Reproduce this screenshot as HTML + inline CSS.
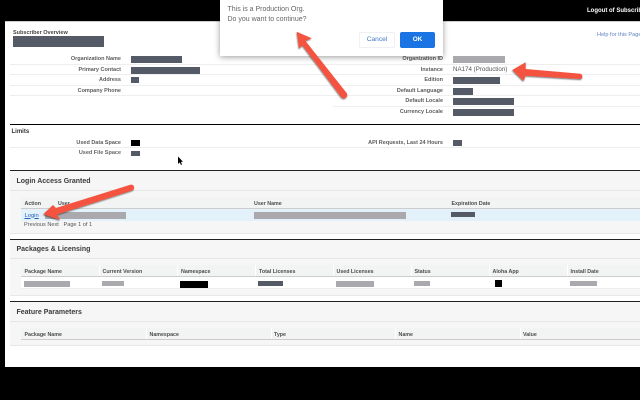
<!DOCTYPE html>
<html><head><meta charset="utf-8"><style>
html,body{margin:0;padding:0;background:#000}
body{width:640px;height:400px;position:relative;overflow:hidden;font-family:"Liberation Sans",sans-serif}
#p{position:absolute;left:0;top:0;width:640px;height:400px;overflow:hidden;filter:blur(.3px)}
#p div{position:absolute}
.t,.l,.h,.s{white-space:nowrap;line-height:8px;height:8px;margin-top:1px}
.l{font-size:5.5px;font-weight:bold;color:#5c5c5c;text-align:right;width:120px}
.h{font-size:5.3px;font-weight:bold;color:#4c4c4c}
.s{font-size:7px;font-weight:bold;color:#3a3a3a;margin-top:1.5px}
.d{background:#555b66}.g{background:#aaaaae}.k{background:#000}
.r{height:1px;background:#eeeeee}
.v{width:1px;background:#fff}
</style></head><body><div id="p">
<div style="left:5px;top:21px;width:635px;height:346px;background:#fff;border-top:1px solid #ccc;box-sizing:border-box"></div>

<div class="t" style="left:587px;top:6px;font-size:6px;font-weight:bold;color:#fff">Logout of Subscriber</div>
<div class="t" style="left:13px;top:27.5px;font-size:5.5px;font-weight:bold;color:#444">Subscriber Overview</div>
<div class="t" style="left:597px;top:29.5px;font-size:5.6px;color:#5f83c4">Help for this Page</div>
<div class="d" style="left:13px;top:36px;width:91px;height:11px"></div>

<div class="r" style="left:10px;top:64px;width:630px"></div>
<div class="r" style="left:10px;top:74px;width:630px"></div>
<div class="r" style="left:10px;top:85px;width:630px"></div>
<div class="r" style="left:10px;top:95px;width:630px"></div>
<div class="r" style="left:333px;top:106px;width:307px"></div>

<div class="l" style="left:1px;top:54px">Organization Name</div>
<div class="l" style="left:1px;top:64.5px">Primary Contact</div>
<div class="l" style="left:1px;top:75px">Address</div>
<div class="l" style="left:1px;top:85.5px">Company Phone</div>
<div class="d" style="left:131px;top:56px;width:51px;height:7px"></div>
<div class="d" style="left:131px;top:67px;width:69px;height:6.5px"></div>
<div class="d" style="left:131px;top:77px;width:8px;height:5.5px"></div>

<div class="l" style="left:323px;top:54px">Organization ID</div>
<div class="l" style="left:323px;top:64.5px">Instance</div>
<div class="l" style="left:323px;top:75px">Edition</div>
<div class="l" style="left:323px;top:85.5px">Default Language</div>
<div class="l" style="left:323px;top:96px">Default Locale</div>
<div class="l" style="left:323px;top:106.5px">Currency Locale</div>
<div class="g" style="left:452.7px;top:56px;width:52.5px;height:7px"></div>
<div class="t" style="left:453px;top:64.5px;font-size:6.2px;color:#555">NA174 (Production)</div>
<div class="d" style="left:453px;top:77px;width:47px;height:7px"></div>
<div class="d" style="left:453px;top:88px;width:20px;height:6.5px"></div>
<div class="d" style="left:453px;top:98px;width:61px;height:7px"></div>
<div class="d" style="left:453px;top:109px;width:61px;height:6.5px"></div>

<div class="k" style="left:10px;top:124px;width:630px;height:1px"></div>
<div class="t" style="left:11.5px;top:127px;font-size:6px;font-weight:bold;color:#333">Limits</div>
<div class="r" style="left:10px;top:147px;width:630px"></div>
<div class="l" style="left:1px;top:137.5px">Used Data Space</div>
<div class="l" style="left:1px;top:148px;color:#666">Used File Space</div>
<div class="l" style="left:323px;top:137.5px">API Requests, Last 24 Hours</div>
<div class="k" style="left:131px;top:140px;width:9px;height:5.5px"></div>
<div class="d" style="left:131px;top:150.5px;width:9px;height:5.5px"></div>
<div class="d" style="left:452.7px;top:140px;width:9.5px;height:5.5px"></div>

<!-- Login section -->
<div style="left:10px;top:171px;width:630px;height:63px;background:#f6f6f6;border-bottom:1px solid #e8e8e8;box-sizing:border-box"></div>
<div style="left:10px;top:170px;width:630px;height:1.3px;background:#222"></div>
<div class="r" style="left:10px;top:190px;width:630px;background:#e6e6e6"></div>
<div class="s" style="left:16.5px;top:176.5px">Login Access Granted</div>
<div style="left:21px;top:197px;width:619px;height:11.5px;background:#f2f3f3;border-bottom:1px solid #ccc;box-sizing:border-box"></div>
<div class="h" style="left:24.5px;top:198.5px">Action</div>
<div class="h" style="left:58px;top:198.5px">User</div>
<div class="h" style="left:254px;top:198.5px">User Name</div>
<div class="h" style="left:451.5px;top:198.5px">Expiration Date</div>
<div style="left:21px;top:208.5px;width:619px;height:12px;background:#e3f1fb"></div>
<div class="t" style="left:24.5px;top:210.5px;font-size:5.8px;color:#1f5fbf;text-decoration:underline">Login</div>
<div class="g" style="left:45px;top:212px;width:81px;height:7px"></div>
<div class="g" style="left:254px;top:212px;width:152px;height:7px"></div>
<div class="d" style="left:450.5px;top:212px;width:24px;height:5px"></div>
<div class="t" style="left:24px;top:219.5px;font-size:5.6px;color:#555;white-space:pre">Previous Next   Page 1 of 1</div>

<!-- Packages -->
<div style="left:10px;top:240px;width:630px;height:56px;background:#f6f6f6;border-bottom:1px solid #e8e8e8;box-sizing:border-box"></div>
<div style="left:10px;top:239px;width:630px;height:1.3px;background:#222"></div>
<div class="r" style="left:10px;top:258px;width:630px;background:#e6e6e6"></div>
<div class="s" style="left:16.5px;top:244.5px">Packages &amp; Licensing</div>
<div style="left:21px;top:265px;width:619px;height:12px;background:#f2f3f3;border-bottom:1px solid #ccc;box-sizing:border-box"></div>
<div class="v" style="left:99px;top:265px;height:11px"></div>
<div class="v" style="left:177px;top:265px;height:11px"></div>
<div class="v" style="left:255px;top:265px;height:11px"></div>
<div class="v" style="left:333px;top:265px;height:11px"></div>
<div class="v" style="left:411px;top:265px;height:11px"></div>
<div class="v" style="left:489px;top:265px;height:11px"></div>
<div class="v" style="left:567px;top:265px;height:11px"></div>
<div class="h" style="left:24.5px;top:267px">Package Name</div>
<div class="h" style="left:102.5px;top:267px">Current Version</div>
<div class="h" style="left:181px;top:267px">Namespace</div>
<div class="h" style="left:259px;top:267px">Total Licenses</div>
<div class="h" style="left:336.5px;top:267px">Used Licenses</div>
<div class="h" style="left:414.5px;top:267px">Status</div>
<div class="h" style="left:492.5px;top:267px">Aloha App</div>
<div class="h" style="left:570.5px;top:267px">Install Date</div>
<div style="left:21px;top:277px;width:619px;height:12px;background:#fff;border-bottom:1px solid #eee;box-sizing:border-box"></div>
<div class="g" style="left:24px;top:281px;width:46px;height:6px"></div>
<div class="g" style="left:102px;top:281px;width:22px;height:5px"></div>
<div class="k" style="left:180px;top:281px;width:28px;height:6.5px"></div>
<div class="d" style="left:258px;top:281px;width:25px;height:4.7px"></div>
<div class="g" style="left:336px;top:281px;width:38px;height:6px"></div>
<div class="g" style="left:414px;top:281px;width:16px;height:5px"></div>
<div class="k" style="left:494.5px;top:279.5px;width:7px;height:7px"></div>
<div class="g" style="left:570px;top:281px;width:27px;height:5px"></div>

<!-- Feature -->
<div style="left:10px;top:302px;width:630px;height:44px;background:#f6f6f6;border-bottom:1px solid #e8e8e8;box-sizing:border-box"></div>
<div style="left:10px;top:301px;width:630px;height:1.3px;background:#222"></div>
<div class="r" style="left:10px;top:321px;width:630px;background:#e6e6e6"></div>
<div class="s" style="left:16.5px;top:307px">Feature Parameters</div>
<div style="left:21px;top:328px;width:619px;height:12px;background:#f2f3f3;border-bottom:1px solid #ccc;box-sizing:border-box"></div>
<div class="v" style="left:146px;top:328px;height:11px"></div>
<div class="v" style="left:270.5px;top:328px;height:11px"></div>
<div class="v" style="left:395px;top:328px;height:11px"></div>
<div class="v" style="left:520px;top:328px;height:11px"></div>
<div class="h" style="left:24.5px;top:329.5px">Package Name</div>
<div class="h" style="left:149.5px;top:329.5px">Namespace</div>
<div class="h" style="left:274px;top:329.5px">Type</div>
<div class="h" style="left:398.5px;top:329.5px">Name</div>
<div class="h" style="left:523px;top:329.5px">Value</div>

<!-- Dialog -->
<div style="left:220px;top:-8px;width:223px;height:64px;background:#fff;box-shadow:0 1px 6px rgba(0,0,0,.4)"></div>
<div class="t" style="left:227.5px;top:5px;font-size:7px;color:#666">This is a Production Org.</div>
<div class="t" style="left:227.5px;top:14.5px;font-size:7px;color:#666">Do you want to continue?</div>
<div style="left:359px;top:32px;width:36px;height:16px;box-sizing:border-box;border:1px solid #eef0f3;border-radius:2px;text-align:center;font-size:6.6px;line-height:14px;color:#3f78c8">Cancel</div>
<div style="left:400px;top:32px;width:35px;height:16px;background:#1b74e4;border-radius:2px;text-align:center;font-size:6.4px;font-weight:bold;line-height:16px;color:#fff">OK</div>

<!-- Arrows and cursor -->
<svg style="position:absolute;left:0;top:0" width="640" height="400" viewBox="0 0 640 400">
<defs><filter id="f" x="-20%" y="-20%" width="140%" height="140%"><feDropShadow dx="-.4" dy="1" stdDeviation=".7" flood-color="#000" flood-opacity=".55"/></filter></defs>
<g fill="#f4533f" filter="url(#f)">
<path d="M296.7 31.7 L311.7 38.3 L305.5 41 L347 93.5 Q347.8 96.5 345.5 98 Q343 99 341.5 97.5 L302.5 45.5 L299 48.5 Z"/>
<path d="M512.3 70 L525.7 62.3 L525.7 69 L580.5 73.8 Q582.5 74.5 582.3 77 Q582 79.2 580 79 L525.7 75.7 L523.5 81 Z"/>
<path d="M43.3 214.3 L53 205 L56 208 L130.5 184.7 Q133.5 184.5 134 187 Q134.5 189.5 132 190.5 L57 214.5 L60 220 Z"/>
</g>
<path d="M178 156.5 L178 164 L179.7 162.4 L181 165 L182 164.4 L180.9 161.9 L183 161.7 Z" fill="#000"/>
</svg>
</div></body></html>
